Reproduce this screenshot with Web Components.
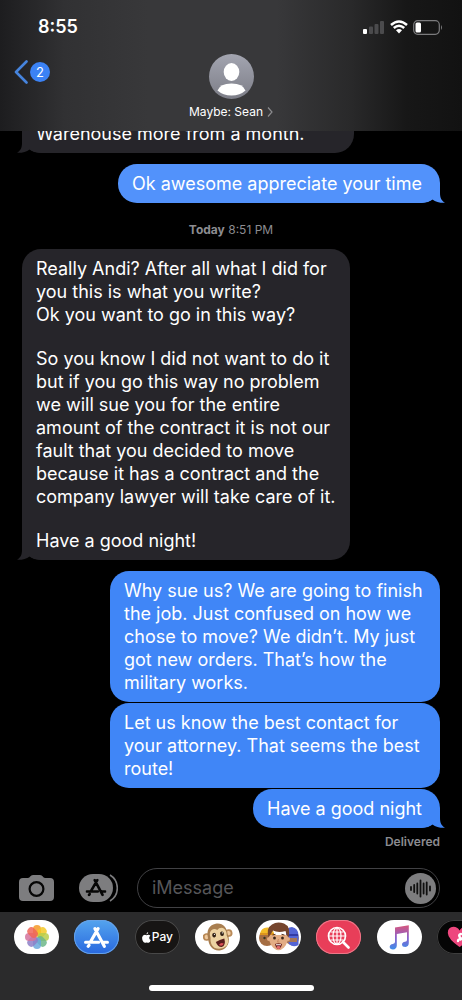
<!DOCTYPE html>
<html lang="en">
<head>
<meta charset="utf-8">
<meta name="viewport" content="width=device-width, initial-scale=1">
<title>Messages</title>
<style>
html,body{margin:0;height:100%;background:#000;overflow:hidden}
body{font-family:Inter,"Liberation Sans",sans-serif;color:#fff}
</style>
</head>
<body>
<messages-app></messages-app>
<script>
const define = (name, html) => customElements.define(name, class extends HTMLElement {
  constructor() {
    super();
    const t = document.createElement('template');
    t.innerHTML = html;
    this.attachShadow({ mode: 'open' }).append(t.content.cloneNode(true));
  }
});

define('status-bar', `
<style>
:host{display:flex;justify-content:space-between;align-items:center;height:54px;padding:0 19px 0 38px;box-sizing:border-box}
time{font-size:18px;line-height:24px;font-weight:600}
.icons{display:flex;align-items:center;gap:5px}
svg{display:block}
</style>
<time>8:55</time>
<div class="icons">
<svg width="22" height="14" viewBox="0 0 22 14"><rect x="0" y="9" width="4" height="5" rx="1" fill="#fff"/><g fill="#4b4b4d"><rect x="6" y="6.500" width="4" height="7.500" rx="1"/><rect x="11.500" y="4" width="4" height="10" rx="1"/><rect x="17" y="1" width="4" height="13" rx="1"/></g></svg>
<svg width="18" height="14" viewBox="0 0 18 14" fill="none" stroke="#fff" stroke-width="2.500"><path d="M1 5 Q9 -2 17 5M3.800 8 Q9 3.500 14.200 8"/><path d="M6 10.200 Q9 8 12 10.200L9 13.500Z" fill="#fff" stroke="none"/></svg>
<svg width="30" height="15" viewBox="0 0 30 15"><rect x=".7" y=".7" width="25.600" height="13.600" rx="4" fill="none" stroke="#7b7b7d" stroke-width="1.200"/><rect x="2.500" y="2.500" width="5.500" height="10" rx="1.500" fill="#fff"/><path d="M28 5q2 2.500 0 5z" fill="#7b7b7d"/></svg>
</div>`);

define('chat-header', `
<style>
:host{display:block;flex:none;height:131px;background:linear-gradient(90deg,#1d1d1f 0,#313133 14%,#38383a 32%,#38383a 60%,#29292a 76%,#171717 88%,#121212 100%)}
nav{display:grid;grid-template-columns:1fr auto 1fr;align-items:start;padding:0 14px}
button{font:inherit;color:inherit;border:0;background:none;padding:0;margin:0}
.back{display:flex;align-items:center;gap:2px;height:36px;justify-self:start}
.count{width:20px;height:20px;border-radius:50%;background:#3b82f4;font-size:13px;line-height:20px;text-align:center}
.who{display:flex;flex-direction:column;align-items:center;gap:5px}
.name{display:flex;align-items:center;gap:4px;font-size:12px;line-height:16px}
svg{display:block}
</style>
<status-bar></status-bar>
<nav>
<button class="back" aria-label="Back, 2 unread"><svg width="14" height="24" viewBox="0 0 14 24" fill="none" stroke="#4684dd" stroke-width="2.600" stroke-linecap="round" stroke-linejoin="round"><path d="M12.500 1.500 2 12l10.500 10.500"/></svg><span class="count">2</span></button>
<button class="who"><svg width="45" height="45" viewBox="0 0 45 45"><defs><linearGradient id="a" x2="0" y2="1"><stop stop-color="#a3a5b0"/><stop offset="1" stop-color="#7d7e88"/></linearGradient><clipPath id="c"><circle cx="22.500" cy="22.500" r="22.500"/></clipPath></defs><g clip-path="url(#c)"><path fill="url(#a)" d="M0 0h45v45H0z"/><ellipse cx="22.500" cy="18" rx="7.800" ry="9" fill="#fff"/><path d="M8.500 36.500Q11 29.500 22.500 29.500T36.500 36.500Q31 41.500 22.500 41.500T8.500 36.500Z" fill="#fff"/></g></svg>
<span class="name">Maybe: Sean <svg width="6" height="10" viewBox="0 0 6 10" fill="none" stroke="#8b8b8e" stroke-width="1.200"><path d="M1 .5 5 5 1 9.500"/></svg></span></button>
<span></span>
</nav>`);

define('message-bubble', `
<style>
:host{display:block;position:relative;isolation:isolate;align-self:flex-start;box-sizing:border-box;max-width:328px;padding:8px 18px 8px 14px;border-radius:19px;background:var(--bubble);font-size:18px;line-height:23px;--bubble:#26252a}
:host([mine]){align-self:flex-end;max-width:330px;--bubble:#4086f7}
:host([early]){--bubble:#5292fb}
:host([wide]){padding-right:14px}
:host([continued]){min-width:332px;max-width:332px;border-radius:0 0 19px 19px}
svg{display:none;position:absolute;z-index:-1;bottom:0;left:-5px;fill:var(--bubble)}
:host([tail]) svg{display:block}
:host([mine]) svg{left:auto;right:-5px;transform:scaleX(-1)}
::slotted(p){margin:0 0 21px}
::slotted(p:last-of-type){margin:0}
</style>
<svg width="24" height="19" viewBox="0 0 24 19"><path d="M5 0V9C5 14 3.500 16.500 0 18.800C5 19 9.500 18 12.500 15.500Q16 18.500 24 19V0Z"/></svg>
<slot></slot>`);

define('chat-thread', `
<style>
:host{display:flex;flex:1;min-height:0;flex-direction:column;justify-content:flex-end;overflow:hidden;padding:0 22px;box-sizing:border-box}
::slotted(*){flex:none}
::slotted(.gap){margin-top:11px}
::slotted(.near){margin-top:1px}
::slotted(time){margin:19px 0 11px;text-align:center;font-size:12px;line-height:16px;color:#8c8c91}
::slotted(small){margin:6px 0 18px;text-align:right;font-size:12px;line-height:16px;font-weight:600;color:#8c8c91}
</style><slot></slot>`);

const storeMark = `<g fill="none" stroke="currentColor" stroke-linecap="round" stroke-width="3"><path d="M10.500 1.500 19.500 18.500M13.500 1.500 6 14.500M1.500 14.500H14M18.500 14.500H22.500M4 18.500 4.800 17.500"/></g>`;

define('message-composer', `
<style>
:host{display:flex;align-items:center;flex:none;padding:0 22px 4px 19px}
button{border:0;background:none;padding:0;display:block;flex:none}
svg{display:block}
.apps{margin:0 19px 0 25px;color:#060606}
.field{display:flex;align-items:center;flex:1;min-width:0;box-sizing:border-box;height:40px;border:1px solid #414144;border-radius:20px;padding:0 3px 0 14px}
input{flex:1;min-width:0;border:0;outline:0;padding:0;background:none;color:#fff;font:18px/24px Inter,"Liberation Sans",sans-serif}
input::placeholder{color:#565659;opacity:1}
</style>
<button aria-label="Camera"><svg width="35" height="28" viewBox="0 0 35 28"><path fill="#7d7d7f" d="M4 4H9Q10.500 4 11.200 2.600 12 1 14 1H21Q23 1 23.800 2.600 24.500 4 26 4H31Q35 4 35 8V23Q35 27 31 27H4Q0 27 0 23V8Q0 4 4 4Z"/><circle cx="17.500" cy="15" r="6.900" fill="none" stroke="#060606" stroke-width="2.200"/></svg></button>
<button class="apps" aria-label="Apps"><svg width="39" height="28" viewBox="0 0 39 28"><path d="M31 1Q38.300 5.500 38.300 14T31 27" fill="none" stroke="#7d7d7f" stroke-width="1.600"/><rect x="-1" y="-1" width="37" height="30" rx="15" fill="#000"/><rect width="34" height="28" rx="14" fill="#7d7d7f"/><svg x="6.500" y="4.500" width="21" height="18" viewBox="0 0 24 20">${storeMark}</svg></svg></button>
<div class="field"><input type="text" placeholder="iMessage" aria-label="iMessage"><button aria-label="Record audio"><svg width="31" height="31" viewBox="0 0 31 31"><circle cx="15.500" cy="15.500" r="15.500" fill="#7d7d7f"/><path d="M6 14v3M9.200 12v7M12.300 10.500v10M15.500 7.500v16M18.600 10.500v10M21.700 9.500v12M25 13.500v4" stroke="#101010" stroke-width="1.800" stroke-linecap="round"/></svg></button></div>`);

define('dock-app', `
<style>
:host{display:block;flex:none}
button{display:flex;align-items:center;justify-content:center;width:45px;height:34px;padding:0;border:0;border-radius:17px;overflow:hidden;background:var(--face,#fff);box-shadow:inset 0 0 0 1px var(--edge,transparent);color:#fff;font:500 12px/16px Inter,"Liberation Sans",sans-serif}
</style><button><slot></slot></button>`);

const petals = ['#f49a28','#f5c928','#b9ce4c','#6db78a','#6ba8dc','#8d7fc7','#d4739d','#ef6658']
  .map((c, i) => `<rect x="8" y="0" width="8" height="11.500" rx="4" fill="${c}" fill-opacity=".85" transform="rotate(${i * 45} 12 12)"/>`).join('');

define('app-dock', `
<style>
:host{display:flex;flex-direction:column;justify-content:space-between;align-items:center;flex:none;height:88px;box-sizing:border-box;padding:8px 0 9px;background:#2b2b2c;overflow:hidden}
.row{display:flex;justify-content:space-between;align-self:stretch;margin:0 -20px 0 14px}
.home{width:165px;height:6px;border-radius:3px;background:#fff}
svg{display:block;flex:none}
</style>
<div class="row">
<dock-app><svg width="24" height="24" viewBox="0 0 24 24">${petals}</svg></dock-app>
<dock-app style="--face:linear-gradient(#54a4ee,#2868df);--edge:#66a2e8"><svg width="25" height="21" viewBox="0 0 24 20">${storeMark}</svg></dock-app>
<dock-app style="--face:#171514;--edge:#484848"><svg width="9" height="11" viewBox="0 0 9 11"><path fill="#fff" d="M6.200 0Q6.400 1.700 4.500 2.500 4.200.8 6.200 0ZM4.600 3.200Q5.400 2.700 6.300 2.700 7.600 2.700 8.400 3.800 7.100 4.600 7.200 6 7.300 7.400 8.800 8 8 10.700 6.600 10.800 5.800 10.800 4.700 10.400 3.600 10.800 2.900 10.800 1.700 10.800.8 9 0 7.300.1 5.600.5 2.800 2.900 2.700 3.800 2.800 4.600 3.200Z"/></svg><span style="margin-left:1px">Pay</span></dock-app>
<dock-app><svg width="30" height="30" viewBox="0 0 30 30"><g transform="rotate(-10 15 15)"><circle cx="3.800" cy="13" r="3.800" fill="#b98a58"/><circle cx="26.200" cy="13" r="3.800" fill="#b98a58"/><circle cx="4" cy="13" r="2.200" fill="#efc99d"/><circle cx="26" cy="13" r="2.200" fill="#efc99d"/><path d="M15 1.500C22 1.500 25.500 7 25 13.500 27 22 22 28.500 15.500 28.500 8 28.500 4 23 5 14 4.500 7 8 1.500 15 1.500Z" fill="#a87e50"/><path d="M15.500 8Q18 5.500 21.500 7 25 10 23.800 15 26 21 22 25 15.500 29 9.500 25 5.800 21 7.500 14.500 6.500 9 10 7 13 5.500 15.500 8Z" fill="#ecd2a2"/><ellipse cx="11.500" cy="12.500" rx="1.900" ry="2.300" fill="#302015"/><ellipse cx="19.500" cy="12.500" rx="1.900" ry="2.300" fill="#302015"/><circle cx="12" cy="11.700" r=".6" fill="#fff"/><circle cx="20" cy="11.700" r=".6" fill="#fff"/><path d="M12 19.500Q16 18 21 17.500 21.500 24.500 17 25.500 13 25 12 19.500Z" fill="#571c1c"/><path d="M14.500 23q2.500-2.500 5-.5-1.500 3-5 .5Z" fill="#de5157"/></g></svg></dock-app>
<dock-app><svg width="41" height="32" viewBox="0 0 41 32"><circle cx="9" cy="17" r="8" fill="#a56e43"/><path d="M2 13Q3 6 10 6.500 15 7 16 13Z" fill="#f2bb28"/><path d="M2 13h14" stroke="#dc941e" stroke-width="2"/><circle cx="6.500" cy="17" r="1.200" fill="#332"/><circle cx="34" cy="17" r="7" fill="#a77656"/><path d="M28 13Q28 6 34 6 40 7 40.500 14V24Q35 27 31 23Z" fill="#5364d4"/><path d="M29 14h11" stroke="#323aa5" stroke-width="2"/><path d="M30 17h9v4H30z" fill="#a77656"/><path d="M11 14H30Q30.500 22 26 26.500 20.500 32 15 26.500 10.500 22 11 14Z" fill="#e3ad84"/><circle cx="11" cy="18" r="2" fill="#e3ad84"/><circle cx="30" cy="18" r="2" fill="#e3ad84"/><path d="M10.500 16.500Q8 7 14 3.500 19 0 26 2.500 33 5.500 30.500 16.500 28 14 27.500 10 20 12 15 9.500 13.500 12 10.500 16.500Z" fill="#75452d"/><path d="M14.500 14l3-.7M23.500 13.300l3 .7" stroke="#583320"/><ellipse cx="16.500" cy="17" rx="1.400" ry="1.600" fill="#382518"/><ellipse cx="24.500" cy="17" rx="1.400" ry="1.600" fill="#382518"/><path d="M20.500 18l-1 3h2" fill="none" stroke="#c98a62"/><path d="M17 23q3.500-1.500 7 0-1 5-3.500 5t-3.500-5Z" fill="#6b2020"/><path d="M18 23.200h5v1h-5z" fill="#fff"/><ellipse cx="20.500" cy="26.500" rx="2" ry="1.400" fill="#e36c6c"/></svg></dock-app>
<dock-app style="--face:#e83e59;--edge:#ed7889"><svg width="23" height="23" viewBox="0 0 23 23" fill="none" stroke="#fff"><circle cx="10" cy="10" r="8.500" stroke-width="1.700"/><g stroke-width="1.200"><ellipse cx="10" cy="10" rx="4" ry="8"/><path d="M10 2v16M2 10h16M3.500 6h13M3.500 14h13"/></g><path d="M16 16l5.500 5.500" stroke-width="2.600" stroke-linecap="round"/></svg></dock-app>
<dock-app><svg width="21" height="25" viewBox="0 0 21 25"><defs><linearGradient id="m" x2="0" y2="1"><stop stop-color="#d7577c"/><stop offset=".5" stop-color="#8a5fca"/><stop offset="1" stop-color="#3f8eea"/></linearGradient></defs><path fill="url(#m)" d="M6 2.500 19.800.3V18Q19.800 21.500 16.500 22 13 22 13 19.500 13 17.200 16 16.800 18 16.500 18 15V7.300L7.800 9V20.500Q7.600 24.200 4 24.500.7 24.500.7 21.800.8 19.500 3.800 19 6 18.700 6 17Z"/></svg></dock-app>
<dock-app style="--face:#050505;--edge:#3d3d3d"><svg width="25" height="22" viewBox="0 0 25 22"><path fill="#ee477e" d="M12.500 21Q1 13 .8 7 .8 1 6.500.8 10.500.8 12.500 4.500 14.500.8 18.500.8 24.200 1 24.200 7 24 13 12.500 21Z"/><path d="M13 11.500q-2-3 1-3.500M11 15q0-2 2.500-1.500l4-3" fill="none" stroke="#fff" stroke-width="2.400" stroke-linecap="round"/></svg></dock-app>
</div>
<div class="home"></div>`);

define('messages-app', `
<style>:host{display:flex;flex-direction:column;height:100vh;background:#000}</style>
<chat-header></chat-header>
<chat-thread>
<message-bubble continued tail>Warehouse more from a month.</message-bubble>
<message-bubble class="gap" mine early tail>Ok awesome appreciate your time</message-bubble>
<time><b>Today</b> 8:51 PM</time>
<message-bubble wide tail><p>Really Andi? After all what I did for you this is what you write?<br>Ok you want to go in this way?</p><p>So you know I did not want to do it but if you go this way no problem we will sue you for the entire amount of the contract it is not our fault that you decided to move because it has a contract and the company lawyer will take care of it.</p><p>Have a good night!</p></message-bubble>
<message-bubble class="gap" wide mine>Why sue us? We are going to finish the job. Just confused on how we chose to move? We didn’t. My just got new orders. That’s how the military works.</message-bubble>
<message-bubble class="near" wide mine>Let us know the best contact for your attorney. That seems the best route!</message-bubble>
<message-bubble class="near" mine tail>Have a good night</message-bubble>
<small>Delivered</small>
</chat-thread>
<message-composer></message-composer>
<app-dock></app-dock>`);
</script>
</body>
</html>
